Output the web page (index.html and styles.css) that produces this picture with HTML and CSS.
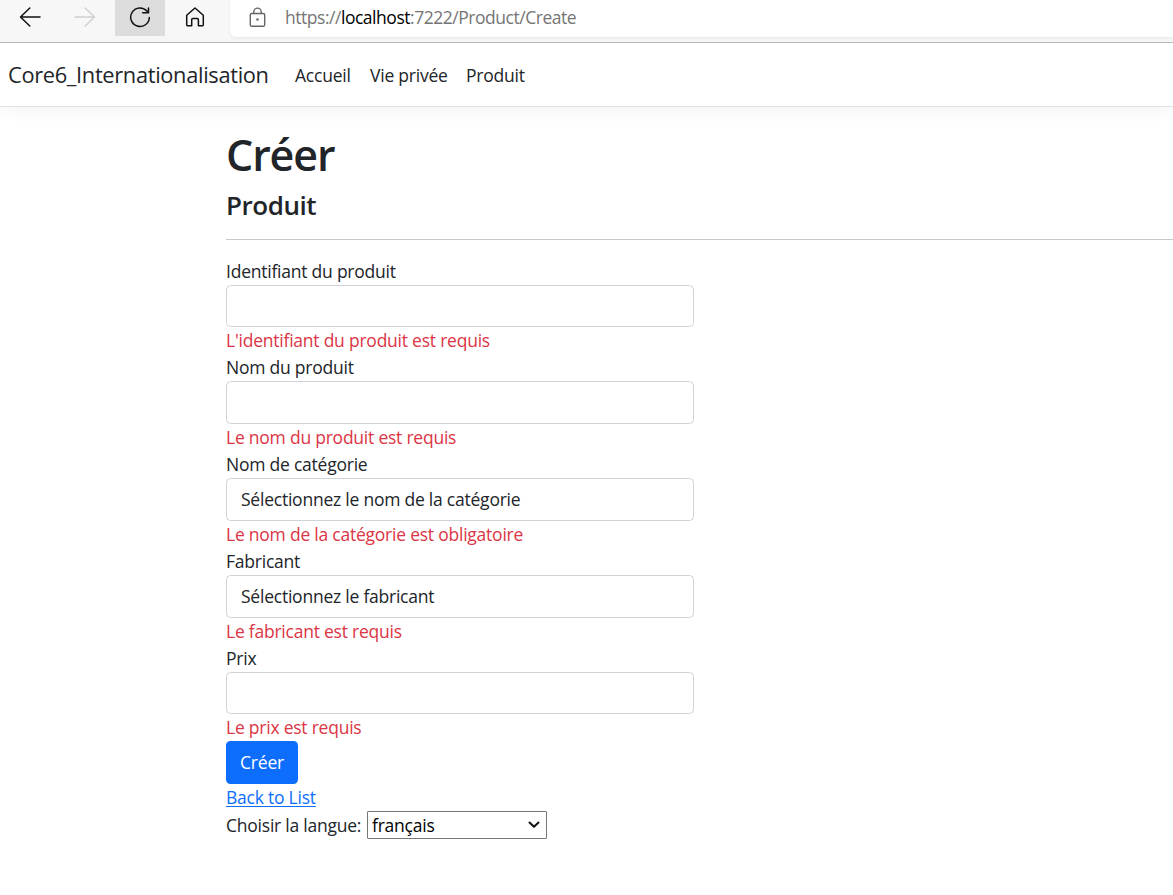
FILE: index.html
```html
<!DOCTYPE html>
<html lang="fr">
<head>
<meta charset="utf-8">
<title>Créer - Core6_Internationalisation</title>
<link rel="stylesheet" href="styles.css">
</head>
<body>
<div class="toolbar">
  <div class="tool"><svg width="22" height="22" viewBox="0 0 22 22"><path d="M21 11H1.5M10.8 2L1.5 11L10.8 20"/></svg></div>
  <div class="tool disabled"><svg width="22" height="22" viewBox="0 0 22 22"><path d="M1 11H20.5M11.2 2L20.5 11L11.2 20"/></svg></div>
  <div class="tool active"><svg width="22" height="22" viewBox="0 0 22 22"><path d="M18.1 5.2A9.3 9.3 0 1 0 20.3 11.4M19.5 2V6.7H13.6"/></svg></div>
  <div class="tool"><svg width="22" height="22" viewBox="0 0 22 22"><path d="M2.7 9.3L11 2L19.3 9.3V18.7Q19.3 19.8 18.2 19.8H14.4V13.7Q14.4 12.6 13.3 12.6H8.8Q7.7 12.6 7.7 13.7V19.8H3.8Q2.7 19.8 2.7 18.7Z"/></svg></div>
  <div class="address">
    <svg class="lock" width="18" height="22" viewBox="0 0 18 22"><rect x="2.3" y="6.5" width="14.4" height="12.8" rx="1.6"/><path d="M5.8 6.5V4.8a3.7 3.7 0 0 1 7.4 0V6.5"/><circle cx="9.5" cy="12.5" r=".6"/></svg>
    <span class="url">https://<b>localhost</b>:7222/Product/Create</span>
  </div>
</div>
<nav class="navbar">
  <a class="brand">Core6_Internationalisation</a>
  <a class="link home">Accueil</a>
  <a class="link privacy">Vie privée</a>
  <a class="link product">Produit</a>
</nav>
<main class="container">
  <h1>Créer</h1>
  <h4>Produit</h4>
  <hr>
  <form class="form">
    <label class="text">Identifiant du produit</label>
    <div class="control"></div>
    <span class="text error">L'identifiant du produit est requis</span>
    <label class="text">Nom du produit</label>
    <div class="control"></div>
    <span class="text error">Le nom du produit est requis</span>
    <label class="text">Nom de catégorie</label>
    <div class="control">Sélectionnez le nom de la catégorie</div>
    <span class="text error">Le nom de la catégorie est obligatoire</span>
    <label class="text">Fabricant</label>
    <div class="control">Sélectionnez le fabricant</div>
    <span class="text error">Le fabricant est requis</span>
    <label class="text">Prix</label>
    <div class="control"></div>
    <span class="text error">Le prix est requis</span>
    <button class="submit" type="button">Créer</button>
  </form>
  <div class="text"><a class="back" href="#">Back to List</a></div>
  <div class="language">
    <span class="text">Choisir la langue:</span>
    <div class="select"><span>français</span><svg width="12" height="8" viewBox="0 0 12 8"><path d="M1.5 1.5L6 5.8L10.5 1.5"/></svg></div>
  </div>
</main>
</body>
</html>
```

FILE: styles.css
```css
* { box-sizing: border-box; }
body {
  margin: 0;
  background: #fff;
  color: #212529;
  font: 400 17.5px/27px "Open Sans", "Noto Sans", sans-serif;
  letter-spacing: -0.23px;
  overflow: hidden;
}
svg { fill: none; stroke: #111; stroke-width: 1.5; stroke-linecap: round; stroke-linejoin: round; }
.toolbar {
  display: flex;
  gap: 5px;
  height: 43px;
  padding-left: 5px;
  background: #f7f7f7;
  border-bottom: 1px solid #bcbcbc;
}
.tool { width: 50px; height: 36px; display: flex; justify-content: center; padding-top: 6px; }
.disabled svg { stroke: #d0d0d0; }
.active { background: #dcdcdc; }
.address {
  flex: 1;
  height: 37px;
  margin-left: 5px;
  padding-left: 18px;
  display: flex;
  gap: 19px;
  background: #fff;
  border-radius: 0 0 0 6px;
  box-shadow: 0 1px 3px rgba(0,0,0,.07);
}
.lock { margin-top: 7px; stroke: #666; stroke-width: 1.4; }
.url { line-height: 35px; color: #757575; white-space: nowrap; letter-spacing: -0.47px; }
.url b { font-weight: inherit; color: #000; }
.navbar {
  display: flex;
  height: 64px;
  padding: 0 0 0 8px;
  line-height: 64px;
  border-bottom: 1px solid #dee2e6;
  box-shadow: 0 5px 14px rgba(0,0,0,.045);
}
.brand { font-size: 21.8px; width: 287px; letter-spacing: -0.32px; }
.home { width: 75px; }
.privacy { width: 96px; }
.container { padding: 23px 0 0 226px; }
h1, h4 { margin: 0; font-weight: 600; }
h1 { font-size: 43px; line-height: 50px; letter-spacing: -1.1px; }
h4 { font-size: 26px; line-height: 32px; margin-top: 9px; letter-spacing: -0.45px; }
hr { height: 1px; margin: 18px 0 17.6px; border: 0; background: #c8c9ca; }
.form { display: flex; flex-direction: column; align-items: flex-start; }
.text { display: block; height: 27px; white-space: nowrap; }
.error { color: #dc3545; }
.control {
  width: 468px;
  height: 42.75px;
  padding: 7px 14px;
  border: 1px solid #ced4da;
  border-radius: 4.5px;
}
.submit {
  width: 72px;
  height: 42.75px;
  padding: 0;
  border: 0;
  border-radius: 4.5px;
  background: #0d6efd;
  color: #fff;
  font: inherit;
  letter-spacing: inherit;
}
.back { color: #0d6efd; text-underline-offset: 2px; text-decoration-thickness: 1px; }
.language { display: flex; }
.language .text { width: 141px; line-height: 29px; }
.select {
  width: 180px;
  height: 28px;
  padding: 0 6px 0 4px;
  display: flex;
  align-items: center;
  justify-content: space-between;
  border: 1px solid #767676;
  border-radius: 1px;
  color: #000;
}
.select svg { stroke-width: 2; }
```
